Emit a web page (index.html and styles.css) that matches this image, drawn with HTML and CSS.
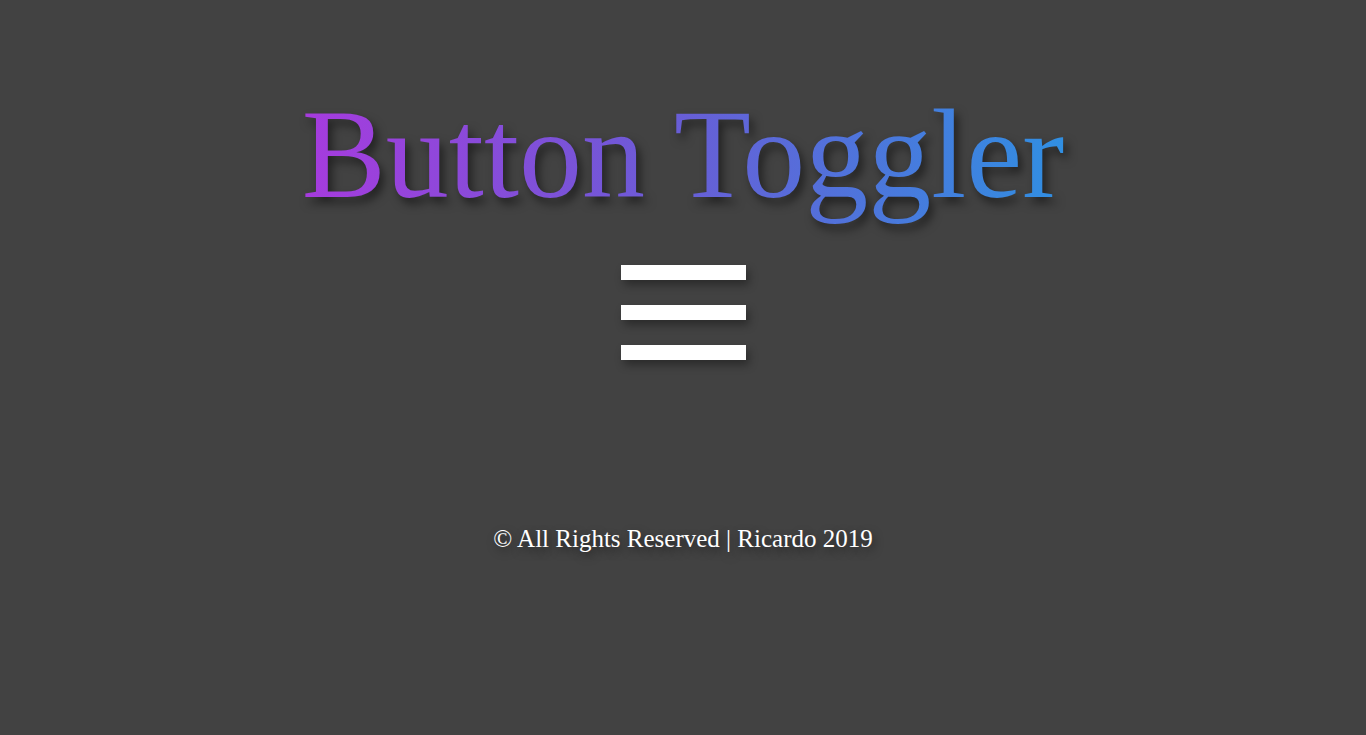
FILE: index.html
```html
<!DOCTYPE html>
<html lang="en">
<head>
<meta charset="utf-8">
<title>Button Toggler</title>
<link rel="stylesheet" href="styles.css">
</head>
<body>
<main class="page">
  <h1 class="title">Button Toggler</h1>
  <button class="toggler" aria-label="Toggle menu">
    <span class="bar"></span>
    <span class="bar"></span>
    <span class="bar"></span>
  </button>
  <footer class="footer">© All Rights Reserved | Ricardo 2019</footer>
</main>
</body>
</html>
```
FILE: styles.css
```css
html, body {
  margin: 0;
  padding: 0;
  background: #424242;
  height: 100%;
}
.page {
  display: flex;
  flex-direction: column;
  align-items: center;
  padding-top: 92px;
  font-family: "Liberation Serif", "Times New Roman", serif;
}
.title {
  margin: 0;
  padding: 0 8px 25px;
  font-size: 126px;
  line-height: 126px;
  font-weight: normal;
  background: linear-gradient(to right, #a83ade 0%, #6a5cd6 48%, #2f90e2 100%);
  -webkit-background-clip: text;
  background-clip: text;
  color: transparent;
  filter: drop-shadow(4px 6px 5px rgba(0,0,0,0.5));
}
.toggler {
  margin-top: 22px;
  padding: 0;
  border: none;
  background: none;
  display: flex;
  flex-direction: column;
  gap: 25px;
  cursor: pointer;
}
.bar {
  display: block;
  width: 125px;
  height: 15px;
  background: #fff;
  box-shadow: 3px 5px 8px rgba(0,0,0,0.35);
}
.footer {
  margin-top: 165px;
  font-size: 25px;
  color: #fff;
  text-shadow: 2px 4px 8px rgba(0,0,0,0.5);
}
```
